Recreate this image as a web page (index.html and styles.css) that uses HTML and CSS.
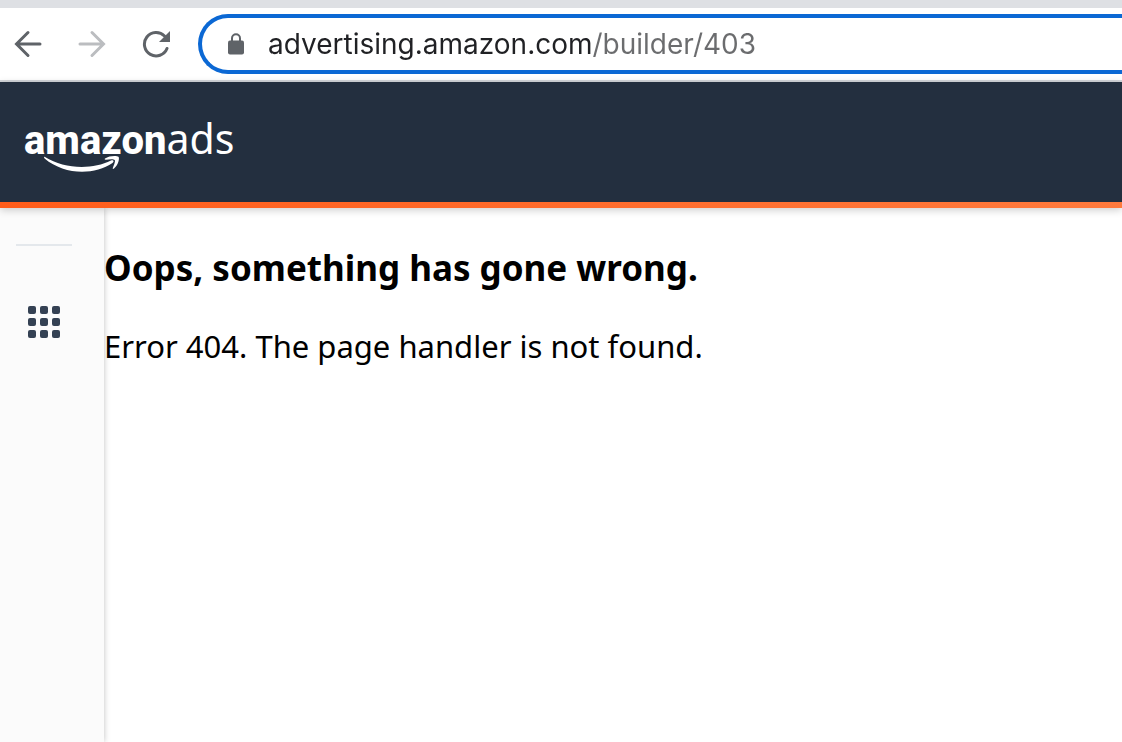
FILE: index.html
```html
<!DOCTYPE html>
<html lang="en">
<head>
  <meta charset="utf-8">
  <meta name="viewport" content="width=device-width, initial-scale=1">
  <title>Amazon Ads</title>
  <link rel="stylesheet" href="styles.css">
</head>
<body>
  <div class="toolbar">
    <nav class="history" aria-label="Browser navigation">
      <button class="tool" type="button" aria-label="Back">
        <svg width="28" height="28" viewBox="0 0 28 28"><path d="M26 14H3M14 2.500L2.500 14L14 25.500" fill="none" stroke="currentColor" stroke-width="3" stroke-linecap="round"/></svg>
      </button>
      <button class="tool" type="button" aria-label="Forward" disabled>
        <svg width="28" height="28" viewBox="0 0 28 28"><path d="M2 14H25M14 2.500L25.500 14L14 25.500" fill="none" stroke="currentColor" stroke-width="3" stroke-linecap="round"/></svg>
      </button>
      <button class="tool" type="button" aria-label="Reload">
        <svg width="28" height="28" viewBox="0 0 28 28"><path d="M25 18.500A11.700 11.700 0 1 1 22.500 6" fill="none" stroke="currentColor" stroke-width="3" stroke-linecap="round"/><path d="M28 1V12H17z" fill="currentColor"/></svg>
      </button>
    </nav>
    <div class="address">
      <svg class="lock" width="16" height="22" viewBox="0 0 16 22"><rect y="7.500" width="16" height="14" rx="2" fill="currentColor"/><path d="M4 8.500V5.300a4 4 0 0 1 8 0V8.500" fill="none" stroke="currentColor" stroke-width="2"/></svg>
      <input class="url" type="text" aria-label="Address" value="advertising.amazon.com/builder/403" spellcheck="false">
    </div>
  </div>
  <header class="masthead">
    <a class="brand" href="#" aria-label="amazonads">
      <span class="brand-name">amazon</span><span class="brand-ads">ads</span>
      <svg class="smile" width="78" height="18" viewBox="0 0 78 18" fill="#fff"><path d="M1 2C20 14 48 15 67 5.500C69.500 4.500 70.500 6.500 68.500 8C50 20.500 20 20 .6 3.500C-.4 2.500 0 1.400 1 2z"/><path d="M61 3.500C65 .5 73 .3 74.500 1.800C75.800 3.500 74.300 10 70 13.500C69 14.300 68.400 13.800 68.900 12.800C70.300 9.500 71.500 6 70.700 5C69.700 3.800 65.500 4.200 61.800 4.700C60.700 4.800 60.300 4.100 61 3.500z"/></svg>
    </a>
  </header>
  <div class="layout">
    <aside class="sidebar">
      <hr class="divider">
      <button class="apps" type="button" aria-label="Apps">
        <svg width="32" height="32" viewBox="0 0 32 32" fill="#344153"><rect width="8" height="8" rx="2"/><rect x="12" width="8" height="8" rx="2"/><rect x="24" width="8" height="8" rx="2"/><rect y="12" width="8" height="8" rx="2"/><rect x="12" y="12" width="8" height="8" rx="2"/><rect x="24" y="12" width="8" height="8" rx="2"/><rect y="24" width="8" height="8" rx="2"/><rect x="12" y="24" width="8" height="8" rx="2"/><rect x="24" y="24" width="8" height="8" rx="2"/></svg>
      </button>
    </aside>
    <main class="content">
      <h1 class="title">Oops, something has gone wrong.</h1>
      <p class="message">Error 404. The page handler is not found.</p>
    </main>
  </div>
</body>
</html>
```

FILE: styles.css
```css
* {
  box-sizing: border-box;
}

body {
  margin: 0;
  min-height: 100vh;
  display: flex;
  flex-direction: column;
  overflow-x: hidden;
  background: #fff;
  color: #000;
  font-family: "Noto Sans", sans-serif;
}

button {
  padding: 0;
  border: 0;
  background: none;
}

svg {
  display: block;
}

.toolbar {
  display: flex;
  align-items: center;
  gap: 28px;
  padding: 6px 0 6px 14px;
  border-top: 8px solid #dee0e4;
  border-bottom: 2px solid #d3d6da;
}

.history {
  display: flex;
  gap: 36px;
}

.tool {
  color: #5f6368;
}

.tool:disabled {
  color: #bbbdc0;
}

.address {
  flex: 1;
  display: flex;
  align-items: center;
  gap: 24px;
  height: 60px;
  padding-left: 26px;
  border: 4px solid #0b68d4;
  border-right: 0;
  border-radius: 30px 0 0 30px;
}

.lock {
  color: #5f6368;
}

.url {
  flex: 1;
  min-width: 0;
  padding: 0;
  border: 0;
  outline: 0;
  font: 28px/36px Inter, sans-serif;
  color: transparent;
  background: linear-gradient(90deg, #202124 325px, #6b6c6e 325px);
  background-clip: text;
  -webkit-background-clip: text;
}

.masthead {
  position: relative;
  z-index: 1;
  background: #232f3f;
  padding: 32px 24px;
  border-bottom: 6px solid;
  border-image: linear-gradient(90deg, #ff5c1a, #ff7a3d) 1;
  box-shadow: 0 2px 8px rgba(0, 0, 0, 0.2);
}

.brand {
  position: relative;
  display: inline-flex;
  height: 56px;
  align-items: baseline;
  color: #fff;
  font-family: Roboto, sans-serif;
  line-height: 48px;
  text-decoration: none;
}

.brand-name {
  font-size: 40px;
  font-weight: 800;
}

.brand-ads {
  font-family: "Noto Sans", sans-serif;
  font-size: 41px;
  font-weight: 400;
}

.smile {
  position: absolute;
  left: 20px;
  top: 41px;
}

.layout {
  flex: 1;
  display: flex;
}

.sidebar {
  width: 104px;
  padding: 36px 32px 0 16px;
  background: #fbfbfb;
  box-shadow: 0 0 6px rgba(0, 0, 0, 0.25);
}

.divider {
  height: 2px;
  margin: 0 0 60px;
  border: 0;
  background: #e4e8ec;
}

.apps {
  margin-left: 12px;
}

.content {
  flex: 1;
  padding-top: 32px;
}

.title {
  margin: 0;
  font-size: 35px;
  font-weight: 700;
  line-height: 56px;
}

.message {
  margin: 26px 0 0;
  font-size: 31px;
  line-height: 48px;
}
```
